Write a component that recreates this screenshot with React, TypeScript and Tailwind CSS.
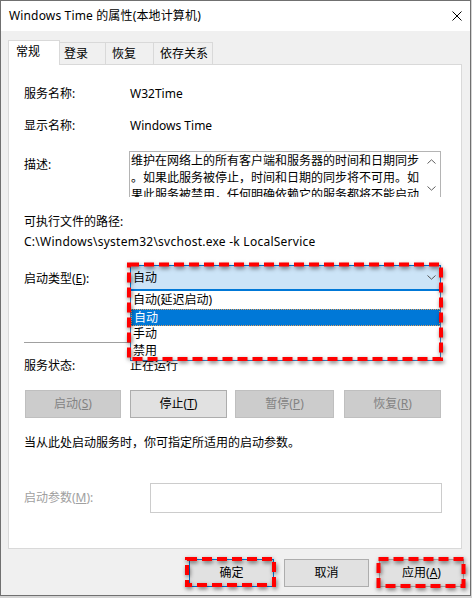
import React from "react";

const Chevron = ({ up = false }: { up?: boolean }) => (
  <svg width="9" height="5" viewBox="0 0 9 5" className="block">
    <path
      d={up ? "M0.5 4.5 L4.5 0.8 L8.5 4.5" : "M0.5 0.5 L4.5 4.2 L8.5 0.5"}
      fill="none"
      stroke="#606060"
      strokeWidth="1"
    />
  </svg>
);

const tabs = [
  { label: "常规", w: "w-[52px]", pl: "pl-[7px]", active: true },
  { label: "登录", w: "w-[47px]", pl: "pl-[4px]", active: false },
  { label: "恢复", w: "w-[49px]", pl: "pl-[6px]", active: false },
  { label: "依存关系", w: "w-[60px]", pl: "pl-[6px]", active: false },
];

const options = ["自动(延迟启动)", "自动", "手动", "禁用"];

export default function App() {
  return (
    <div className="relative h-[598px] w-[472px] overflow-hidden bg-[#d4d4d4] font-['Noto_Sans','Noto_Sans_CJK_SC',sans-serif] text-[12px] text-black">
      <div className="flex h-[596px] w-[471px] flex-col border border-[#707070] bg-[#f0f0f0]">
        {/* title bar */}
        <div className="flex h-[30px] shrink-0 items-center justify-between bg-white pr-[8px] pl-[8px]">
          <span className="leading-[20px] tracking-[0.15px]">Windows Time 的属性(本地计算机)</span>
          <svg width="10" height="10" viewBox="0 0 10 10">
            <path d="M0.5 0.5 L9.5 9.5 M9.5 0.5 L0.5 9.5" stroke="#000" strokeWidth="1" />
          </svg>
        </div>

        <div className="flex flex-1 flex-col pt-[9px] pr-[8px] pl-[7px]">
          {/* tabs */}
          <div className="flex h-[24px] items-end">
            {tabs.map((t, i) => (
              <div
                key={t.label}
                className={`${t.w} ${t.pl} ${i > 0 ? "-ml-px" : ""} ${
                  t.active
                    ? "relative z-10 -mb-px h-[25px] bg-white"
                    : "h-[22px] bg-[#f0f0f0]"
                } border-x border-t border-[#d9d9d9] pt-[1px] leading-[20px] whitespace-nowrap`}
              >
                {t.label}
              </div>
            ))}
          </div>

          {/* panel */}
          <div className="flex h-[485px] flex-col border border-[#d9d9d9] bg-white pl-[15px]">
            <div className="mt-[19px] flex h-[20px] items-center leading-[20px]">
              <span className="w-[106px]">服务名称:</span>
              <span>W32Time</span>
            </div>
            <div className="mt-[12px] flex h-[20px] items-center leading-[20px]">
              <span className="w-[106px]">显示名称:</span>
              <span>Windows Time</span>
            </div>

            <div className="mt-[15px] flex h-[46px]">
              <span className="w-[105px] pt-[4px] leading-[20px]">描述:</span>
              <div className="flex h-[46px] w-[312px] overflow-hidden border-x border-t border-[#b4b4b4]">
                <div className="w-[293px] overflow-hidden pl-[1px] leading-[17px] whitespace-nowrap">
                  <div>维护在网络上的所有客户端和服务器的时间和日期同步</div>
                  <div>。如果此服务被停止，时间和日期的同步将不可用。如</div>
                  <div>果此服务被禁用，任何明确依赖它的服务都将不能启动</div>
                </div>
                <div className="flex flex-1 flex-col items-center pt-[7px]">
                  <Chevron up />
                  <div className="mt-[22px]">
                    <Chevron />
                  </div>
                </div>
              </div>
            </div>

            <div className="mt-[15px] h-[20px] leading-[20px]">可执行文件的路径:</div>
            <div className="h-[20px] leading-[20px] tracking-[0.25px]">
              {"C:\\Windows\\system32\\svchost.exe -k LocalService"}
            </div>

            <div className="mt-[13px] flex h-[26px]">
              <span className="mt-[4px] w-[106px] leading-[20px]">
                启动类型(<u>E</u>):
              </span>
              <div className="relative w-[311px]">
                <div className="flex h-[26px] items-center justify-between border border-b-2 border-[#0078d7] bg-[#cce4f7] pr-[4px] pl-[2px] leading-[20px]">
                  <span>自动</span>
                  <svg width="9" height="5" viewBox="0 0 9 5">
                    <path d="M0.5 0.5 L4.5 4.2 L8.5 0.5" fill="none" stroke="#555" strokeWidth="1" />
                  </svg>
                </div>
                <div className="absolute top-full left-0 z-20 w-full border border-t-0 border-[#3c7fc4] bg-white pt-[1px]">
                  {options.map((o, i) => (
                    <div
                      key={i}
                      className={`h-[17px] pl-[2px] leading-[16px] whitespace-nowrap ${
                        i === 1
                          ? "border border-dotted border-[#e0a060] bg-[#0078d7] pl-[1px] text-white"
                          : ""
                      }`}
                    >
                      {o}
                    </div>
                  ))}
                </div>
              </div>
            </div>

            <div className="mt-[51px] mr-[20px] h-px bg-[#a0a0a0]" />

            <div className="mt-[13px] flex h-[20px] items-center leading-[20px]">
              <span className="w-[106px]">服务状态:</span>
              <span>正在运行</span>
            </div>

            <div className="mt-[14px] flex h-[28px] leading-[20px]">
              <div className="ml-[1px] flex w-[96px] items-center justify-center border border-[#bfbfbf] bg-[#cccccc] text-[#838383]">
                启动(<u>S</u>)
              </div>
              <div className="ml-[9px] flex w-[97px] items-center justify-center border border-[#adadad] bg-[#e1e1e1]">
                停止(<u>T</u>)
              </div>
              <div className="ml-[8px] flex w-[99px] items-center justify-center border border-[#bfbfbf] bg-[#cccccc] text-[#838383]">
                暂停(<u>P</u>)
              </div>
              <div className="ml-[10px] flex w-[97px] items-center justify-center border border-[#bfbfbf] bg-[#cccccc] text-[#838383]">
                恢复(<u>R</u>)
              </div>
            </div>

            <div className="mt-[15px] h-[20px] leading-[20px]">
              当从此处启动服务时，你可指定所适用的启动参数。
            </div>

            <div className="mt-[30px] flex h-[30px] items-center">
              <span className="w-[126px] leading-[20px] text-[#a0a0a0]">
                启动参数(<u>M</u>):
              </span>
              <div className="h-[30px] w-[292px] border border-[#cccccc] bg-white" />
            </div>
          </div>

          {/* dialog buttons */}
          <div className="-mr-[2px] mt-[10px] flex justify-end gap-[10px] leading-[20px]">
            <div className="flex h-[28px] w-[85px] items-center justify-center border border-[#0078d7] bg-[#e1e1e1]">
              确定
            </div>
            <div className="flex h-[28px] w-[85px] items-center justify-center border border-[#adadad] bg-[#e1e1e1]">
              取消
            </div>
            <div className="flex h-[28px] w-[85px] items-center justify-center border border-[#adadad] bg-[#e1e1e1]">
              应用(<u>A</u>)
            </div>
          </div>
        </div>
      </div>

      {/* red highlight annotations */}
      <svg
        className="pointer-events-none absolute inset-0 z-30 drop-shadow-[1px_2px_2px_rgba(0,0,0,0.55)]"
        width="472"
        height="598"
      >
        <g fill="none" stroke="#ff0000" strokeWidth="4" strokeDasharray="10 5">
          <rect x="129" y="264.5" width="312" height="94.5" />
          <rect x="187" y="559" width="87" height="26" />
          <rect x="378.5" y="559" width="85" height="27" />
        </g>
      </svg>
    </div>
  );
}
